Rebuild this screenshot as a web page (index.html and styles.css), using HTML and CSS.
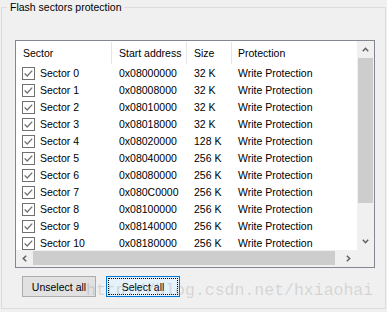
FILE: index.html
```html
<!DOCTYPE html>
<html lang="en">
<head>
  <meta charset="UTF-8">
  <title>Flash sectors protection</title>
  <link rel="stylesheet" href="styles.css">
</head>
<body>
  <fieldset class="group">
    <legend>Flash sectors protection</legend>
    <div class="content">
      <div class="list">
        <div class="view">
          <div class="head">
            <div class="cell">Sector</div>
            <div class="cell">Start address</div>
            <div class="cell">Size</div>
            <div class="cell">Protection</div>
          </div>
          <div id="rows"></div>
        </div>
        <div class="vscroll">
          <div class="arrow">
            <svg width="7" height="5" viewBox="0 0 7 5"><path d="M0.8 4.2 L3.5 1.3 L6.2 4.2" fill="none" stroke="#606060" stroke-width="1.5"/></svg>
          </div>
          <div class="track"><div class="thumb"></div></div>
          <div class="arrow">
            <svg width="7" height="5" viewBox="0 0 7 5"><path d="M0.8 0.8 L3.5 3.7 L6.2 0.8" fill="none" stroke="#606060" stroke-width="1.5"/></svg>
          </div>
        </div>
        <div class="hscroll">
          <div class="arrow">
            <svg width="5" height="7" viewBox="0 0 5 7"><path d="M4.2 0.8 L1.3 3.5 L4.2 6.2" fill="none" stroke="#606060" stroke-width="1.5"/></svg>
          </div>
          <div class="track"><div class="thumb"></div></div>
          <div class="arrow">
            <svg width="5" height="7" viewBox="0 0 5 7"><path d="M0.8 0.8 L3.7 3.5 L0.8 6.2" fill="none" stroke="#606060" stroke-width="1.5"/></svg>
          </div>
        </div>
        <div class="corner"></div>
      </div>

      <div class="buttons">
        <button type="button" class="btn">Unselect all</button>
        <button type="button" class="btn focus">Select all</button>
      </div>
    </div>
  </fieldset>

  <div class="watermark">http://blog.csdn.net/hxiaohai</div>

  <script>
    const sectors = [
      ["0x08000000", "32 K"],
      ["0x08008000", "32 K"],
      ["0x08010000", "32 K"],
      ["0x08018000", "32 K"],
      ["0x08020000", "128 K"],
      ["0x08040000", "256 K"],
      ["0x08080000", "256 K"],
      ["0x080C0000", "256 K"],
      ["0x08100000", "256 K"],
      ["0x08140000", "256 K"],
      ["0x08180000", "256 K"]
    ];

    const box = `<svg class="check" width="13" height="13" viewBox="0 0 13 13">
      <rect x="0.5" y="0.5" width="12" height="12" fill="#fff" stroke="#707070"/>
      <path d="M2.6 6.4 L5.2 9 L10.2 3.6" fill="none" stroke="#707070" stroke-width="1.3"/>
    </svg>`;

    const rows = document.getElementById("rows");
    sectors.forEach((s, i) => {
      const row = document.createElement("div");
      row.className = "row";
      row.innerHTML = `
        <div class="cell">${box}<span>Sector ${i}</span></div>
        <div class="cell">${s[0]}</div>
        <div class="cell">${s[1]}</div>
        <div class="cell">Write Protection</div>
      `;
      rows.appendChild(row);
    });
  </script>
</body>
</html>
```

FILE: styles.css
```css
body {
  margin: 0;
  background: #f0f0f0;
  font-family: "Liberation Sans", Arial, sans-serif;
  font-size: 10.5px;
  color: #000;
}

.group {
  margin: 0 1px;
  padding: 0;
  border: 1px solid #dcdcdc;
  min-width: 0;
}

.group legend {
  margin-left: 5px;
  padding: 0 3px;
  line-height: 14px;
}

.content {
  padding: 26px 10px 11px 13px;
}

.list {
  height: 228px;
  box-sizing: border-box;
  border: 1px solid #828790;
  background: #fff;
  display: grid;
  grid-template-columns: 1fr 17px;
  grid-template-rows: 1fr 17px;
}

.view {
  overflow: hidden;
}

.head, .row {
  display: grid;
  grid-template-columns: 95px 75px 45px 1fr;
  white-space: nowrap;
}

.head {
  padding: 1px 0;
}

.head .cell {
  height: 22px;
  line-height: 22px;
  padding-left: 7px;
}

.head .cell + .cell {
  border-left: 1px solid #e5e5e5;
}

.head .cell:last-child {
  padding-left: 6px;
}

.row {
  height: 17px;
  line-height: 17px;
}

.row .cell {
  padding-left: 8px;
}

.row .cell:first-child {
  padding-left: 6px;
  display: flex;
  align-items: center;
}

.row .cell:last-child {
  padding-left: 7px;
}

.check {
  display: block;
  margin-right: 5px;
}

.vscroll {
  background: #f0f0f0;
  display: grid;
  grid-template-rows: 17px 1fr 17px;
}

.hscroll {
  background: #f0f0f0;
  display: grid;
  grid-template-columns: 17px 1fr 17px;
}

.arrow {
  display: flex;
  align-items: center;
  justify-content: center;
}

.vscroll .thumb {
  margin: 0 1px;
  height: 145px;
  background: #cdcdcd;
}

.hscroll .thumb {
  margin: 1px 0;
  width: 302px;
  height: 14px;
  background: #cdcdcd;
}

.corner {
  background: #f0f0f0;
}

.buttons {
  display: flex;
  gap: 10px;
  margin-top: 8px;
  padding-left: 7px;
}

.btn {
  width: 74px;
  height: 21px;
  padding: 0;
  border: 1px solid #adadad;
  background: #e1e1e1;
  font-family: inherit;
  font-size: 10.5px;
  color: #000;
}

.btn.focus {
  border-color: #0078d7;
  background: #e5f1fb;
  outline: 1px dotted #000;
  outline-offset: -3px;
}

.watermark {
  position: absolute;
  left: 86px;
  top: 281px;
  font-family: "Liberation Mono", monospace;
  font-size: 16.5px;
  color: rgba(140, 140, 140, 0.28);
  pointer-events: none;
}
```
